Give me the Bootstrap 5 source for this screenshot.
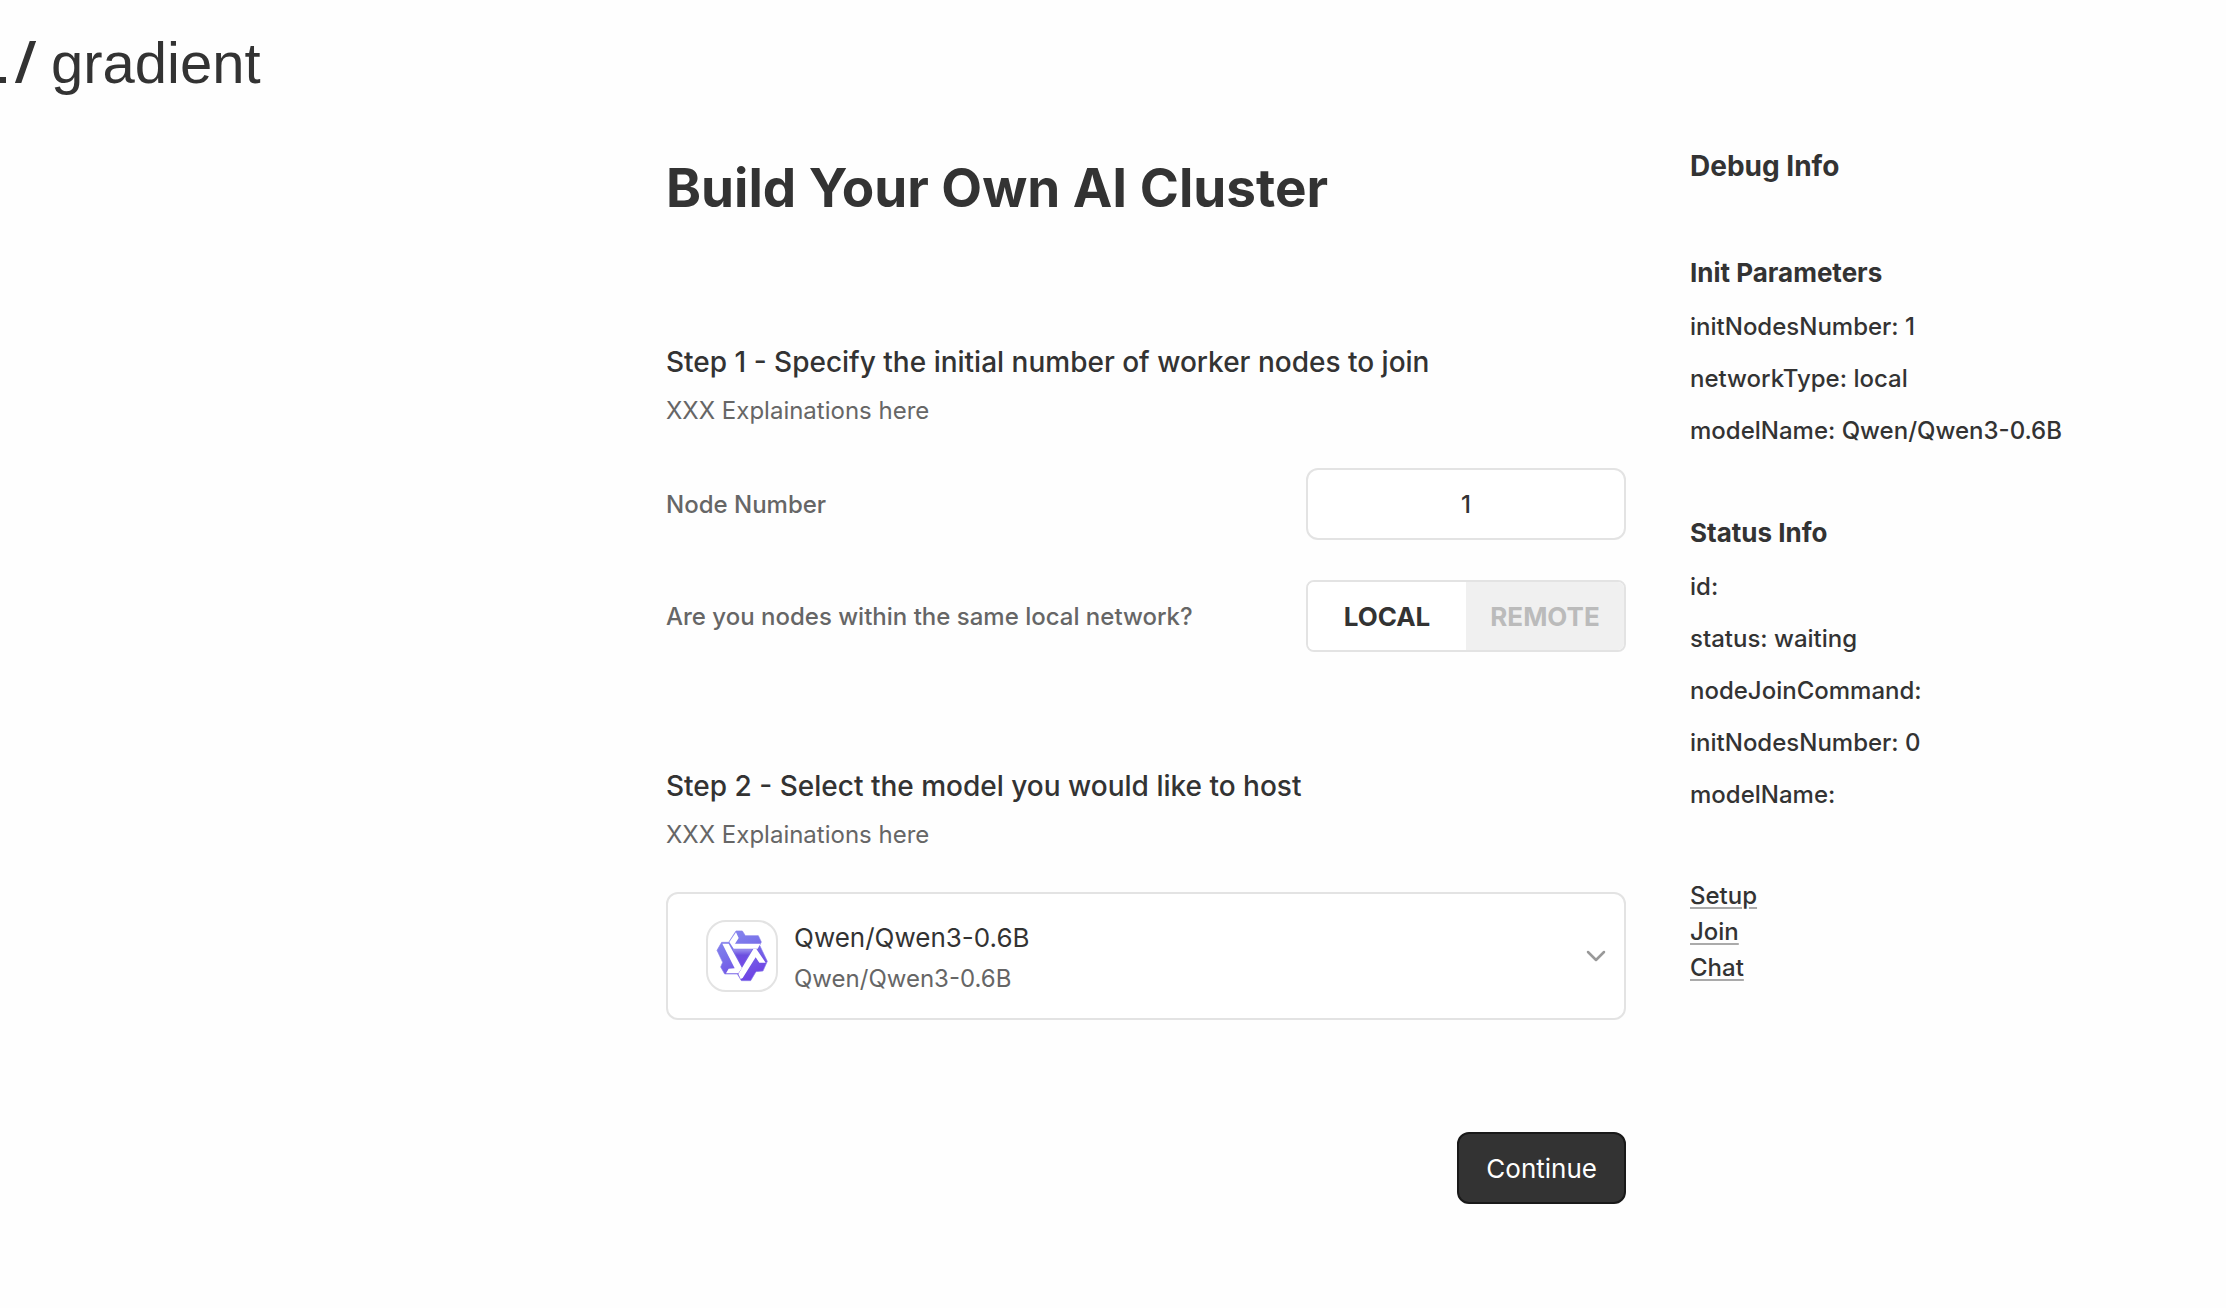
<!DOCTYPE html>
<html lang="en">
<head>
<meta charset="utf-8">
<meta name="viewport" content="width=device-width, initial-scale=1">
<title>Build Your Own AI Cluster</title>
<link href="https://cdn.jsdelivr.net/npm/bootstrap@5.3.0/dist/css/bootstrap.min.css" rel="stylesheet">
<style>
  :root { --ink: #333; --muted-ink: #666; --line: #e3e3e3; }
  body { font-family: Inter, "Liberation Sans", sans-serif; font-size: 24px; line-height: 36px; color: var(--ink); background: #fefefe; overflow-x: hidden; }
  .brand-bar { height: 124px; padding-top: 33px; }
  .brand-link { font-family: "Liberation Sans", Arial, sans-serif; font-size: 58px; line-height: 60px; color: var(--ink); gap: 15px; }
  .page-grid { display: grid; grid-template-columns: 1fr minmax(0, 960px) 536px; gap: 64px; }
  .setup-form { grid-column: 2; padding-top: 30px; }
  .debug-side { padding-top: 22px; font-weight: 500; }
  .page-title { font-size: 53px; line-height: 68px; font-weight: 700; margin-bottom: 120px; }
  .step { margin-bottom: 114px; }
  .step-title { font-size: 28px; line-height: 40px; font-weight: 500; margin-bottom: 10px; }
  .step-note { color: var(--muted-ink); line-height: 38px; margin-bottom: 38px; }
  .field-row { margin-bottom: 40px; color: var(--muted-ink); font-weight: 500; }
  .field-name { padding-top: 2px; }
  .field-box { width: 320px; height: 72px; border: 2px solid var(--line); border-radius: 12px; background: #fff; color: var(--ink); font-size: 24px; font-weight: 500; }
  .net-toggle { overflow: hidden; border-radius: 8px; }
  .net-toggle .btn { display: flex; align-items: center; justify-content: center; flex: 1 1 0; border: 0; border-radius: 0; padding: 0; font-size: 26px; font-weight: 700; color: #bbb; background: #f0f0f0; }
  .net-toggle .btn-check:checked + .btn { background: #fff; color: var(--ink); }
  .model-select { height: 128px; border: 2px solid var(--line); border-radius: 12px; background: #fff; padding: 0 16px 0 38px; color: var(--ink); gap: 16px; }
  .model-logo { width: 72px; height: 72px; border: 2px solid var(--line); border-radius: 20px; }
  .model-text { padding-top: 5px; }
  .model-name { font-size: 26px; line-height: 40px; }
  .model-id { color: var(--muted-ink); line-height: 42px; }
  .form-actions { margin-top: 112px; }
  .btn-continue { height: 72px; padding: 2px 27px 0; border: 2px solid #191919; border-radius: 12px; background: #333; color: #fff; font-size: 26px; }
  .debug-title { font-size: 28px; line-height: 40px; font-weight: 700; margin-bottom: 68px; }
  .debug-heading { font-size: 26px; line-height: 38px; font-weight: 700; margin-bottom: 16px; }
  .debug-list { line-height: 38px; margin-bottom: 64px; display: grid; gap: 14px; }
  .debug-links a { color: var(--ink); text-decoration-color: #aaa; text-decoration-thickness: 2px; text-underline-offset: 3px; }
</style>
</head>
<body>
<header class="brand-bar">
  <a class="brand-link text-decoration-none d-inline-flex align-items-baseline" href="#">
    <svg width="36" height="42" viewBox="0 0 36 42" fill="#333" role="img" aria-label="./"><rect x="-2" y="36" width="8" height="6"/><line x1="16" y1="48" x2="35" y2="-6" stroke="#333" stroke-width="6"/></svg>
    <span>gradient</span>
  </a>
</header>
<div class="page-grid">
  <main class="setup-form">
    <h1 class="page-title">Build Your Own AI Cluster</h1>
    <form>
      <section class="step">
        <h2 class="step-title">Step 1 - Specify the initial number of worker nodes to join</h2>
        <p class="step-note">XXX Explainations here</p>
        <div class="field-row d-flex align-items-center justify-content-between">
          <label class="field-name" for="nodes">Node Number</label>
          <input class="field-box text-center" id="nodes" type="text" inputmode="numeric" value="1">
        </div>
        <div class="field-row d-flex align-items-center justify-content-between mb-0">
          <span class="field-name" id="net-label">Are you nodes within the same local network?</span>
          <div class="field-box net-toggle d-flex" role="group" aria-labelledby="net-label">
            <input class="btn-check" type="radio" name="net" id="net-local" checked>
            <label class="btn" for="net-local">LOCAL</label>
            <input class="btn-check" type="radio" name="net" id="net-remote">
            <label class="btn" for="net-remote">REMOTE</label>
          </div>
        </div>
      </section>
      <section>
        <h2 class="step-title">Step 2 - Select the model you would like to host</h2>
        <p class="step-note">XXX Explainations here</p>
        <button class="model-select w-100 d-flex align-items-center text-start" type="button" aria-haspopup="listbox">
          <svg class="model-logo flex-shrink-0" viewBox="2 2 68 68" aria-hidden="true">
            <defs>
              <linearGradient id="qwen-body" x1="0" y1="0" x2="0.5" y2="1"><stop offset="0" stop-color="#8a8cf0"/><stop offset="0.45" stop-color="#7a74ea"/><stop offset="1" stop-color="#6f45e4"/></linearGradient>
              <linearGradient id="qwen-core" x1="0" y1="0" x2="0" y2="1"><stop offset="0" stop-color="#9a90ee"/><stop offset="0.35" stop-color="#6c4fe0"/><stop offset="1" stop-color="#7748e8"/></linearGradient>
            </defs>
            <!-- 168-unit drawing: body silhouette, three folded arms, core triangle -->
            <g transform="translate(8 8) scale(.3333)">
              <path fill="url(#qwen-body)" stroke="#8a80ec" stroke-width="2" stroke-linejoin="round" d="M66 9H85L94 23H133L142 42L137 52L160 100L147 129L126 131L110 158H82L70 138H32L20 117L26 103L9 67L23 43H44Z"/>
              <path fill="#fff" d="M66 13L74 30L63 47H139L131 62H59L46 42Z"/>
              <path fill="#fff" d="M25 47H44L84 120L73 136H36L44 122L62 121Z"/>
              <path fill="#fff" d="M73 138L80 153L86 150L125 88L136 104H155L127 63H118Z"/>
              <path fill="url(#qwen-core)" d="M56 64H114L84 114Z"/>
            </g>
          </svg>
          <span class="model-text d-flex flex-column flex-grow-1">
            <span class="model-name">Qwen/Qwen3-0.6B</span>
            <span class="model-id">Qwen/Qwen3-0.6B</span>
          </span>
          <svg width="24" height="24" viewBox="0 0 24 24" fill="none" stroke="#999" stroke-width="2.500" stroke-linecap="round" stroke-linejoin="round" aria-hidden="true"><path d="M4 8l8 8 8-8"/></svg>
        </button>
      </section>
      <div class="form-actions d-flex justify-content-end">
        <button class="btn-continue" type="submit">Continue</button>
      </div>
    </form>
  </main>
  <aside class="debug-side">
    <h2 class="debug-title">Debug Info</h2>
    <h3 class="debug-heading">Init Parameters</h3>
    <div class="debug-list">
      <div>initNodesNumber: 1</div>
      <div>networkType: local</div>
      <div>modelName: Qwen/Qwen3-0.6B</div>
    </div>
    <h3 class="debug-heading">Status Info</h3>
    <div class="debug-list">
      <div>id:</div>
      <div>status: waiting</div>
      <div>nodeJoinCommand:</div>
      <div>initNodesNumber: 0</div>
      <div>modelName:</div>
    </div>
    <nav class="debug-links d-flex flex-column align-items-start" aria-label="Pages">
      <a href="#setup">Setup</a>
      <a href="#join">Join</a>
      <a href="#chat">Chat</a>
    </nav>
  </aside>
</div>
<script src="https://cdn.jsdelivr.net/npm/bootstrap@5.3.0/dist/js/bootstrap.bundle.min.js"></script>
</body>
</html>
